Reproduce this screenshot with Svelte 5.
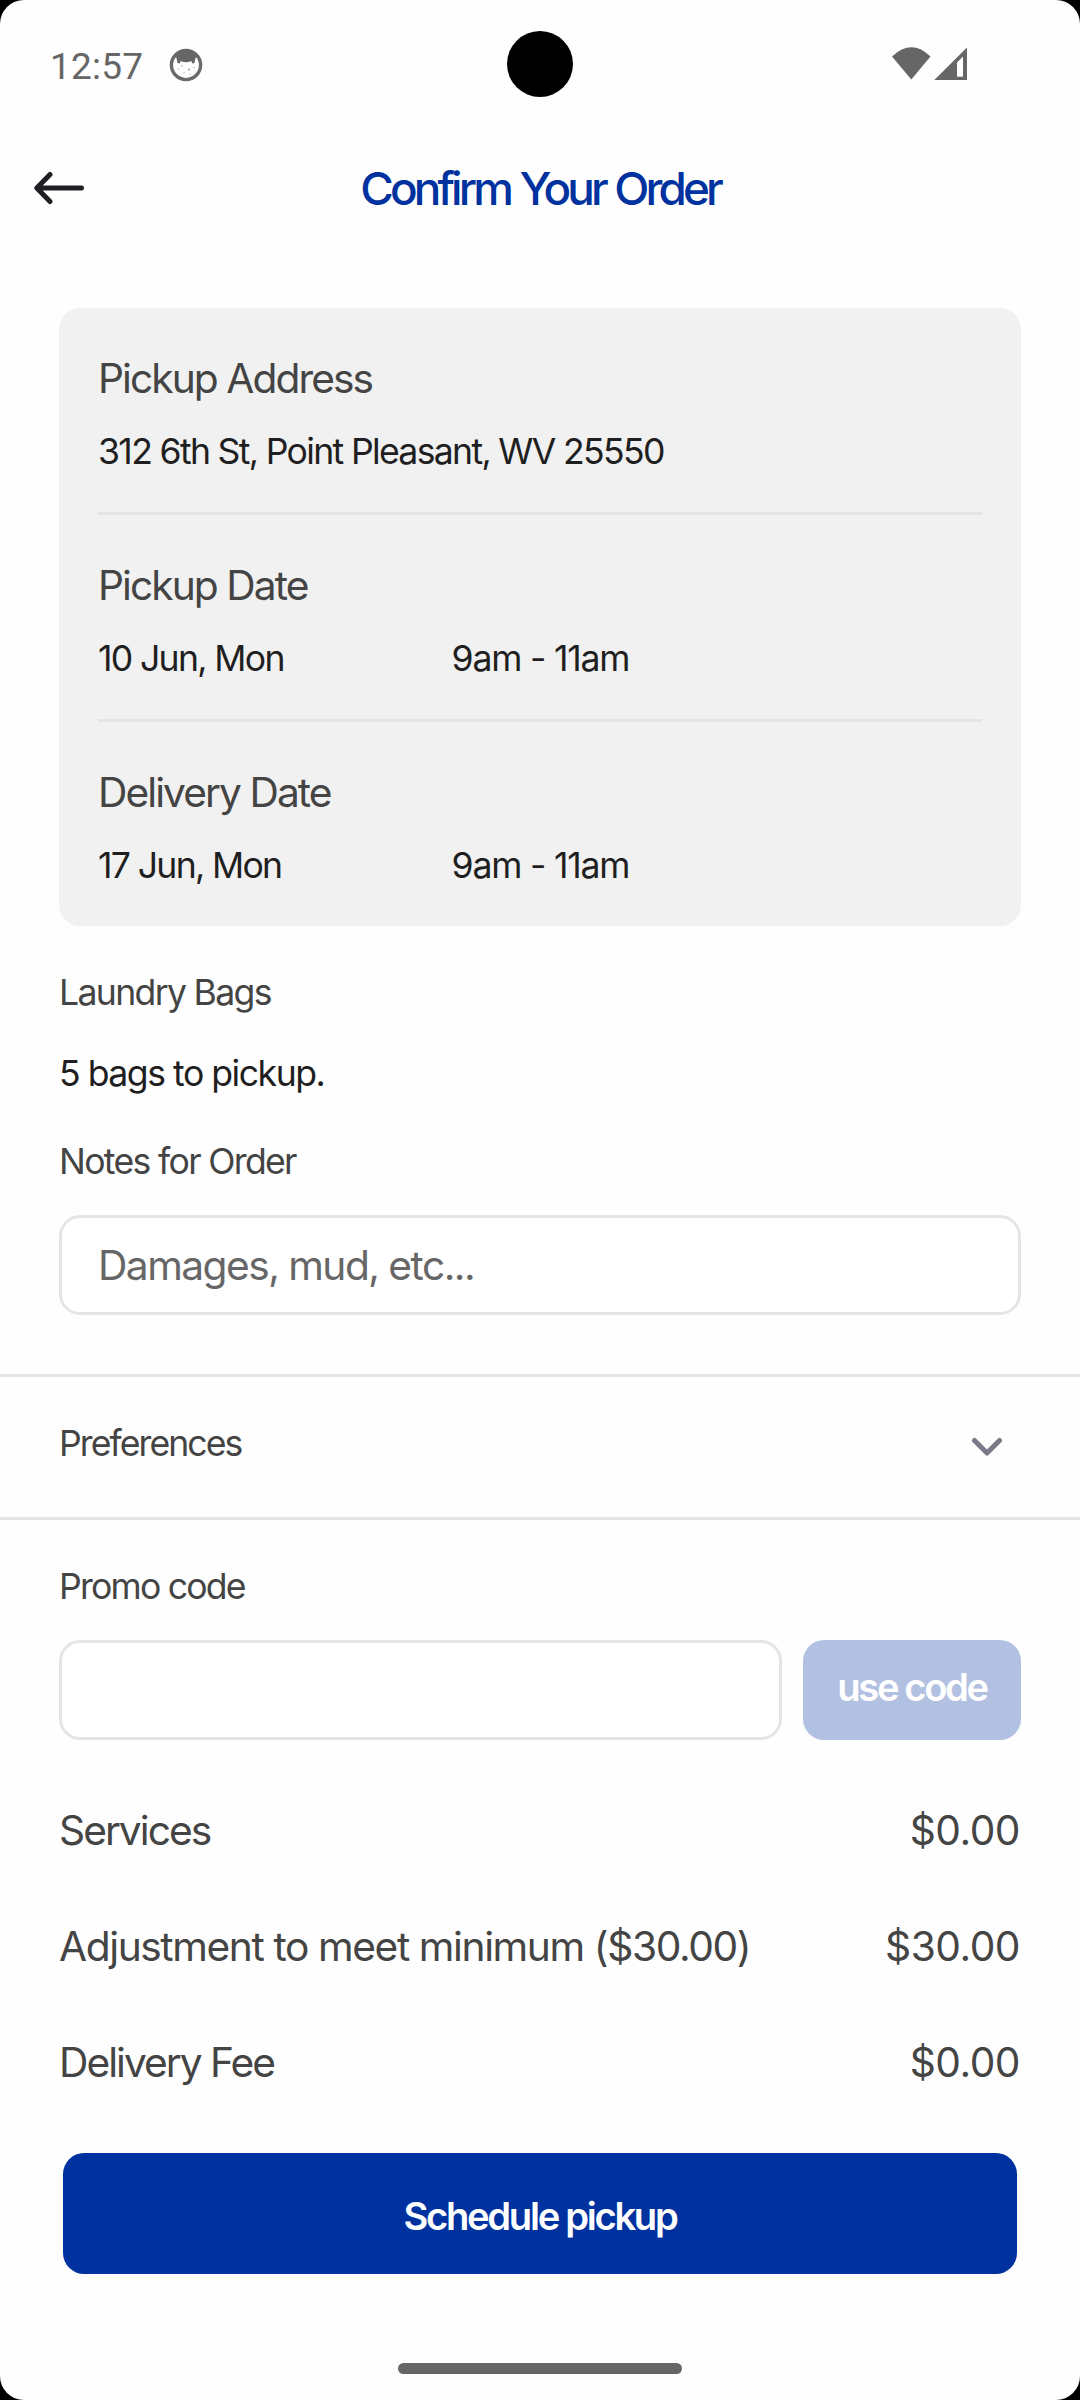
<script lang="ts">
  type Section = { label: string; value: string; time?: string };

  const sections: Section[] = [
    { label: "Pickup Address", value: "312 6th St, Point Pleasant, WV 25550" },
    { label: "Pickup Date", value: "10 Jun, Mon", time: "9am - 11am" },
    { label: "Delivery Date", value: "17 Jun, Mon", time: "9am - 11am" },
  ];

  const fees = [
    { name: "Services", amount: "$0.00" },
    { name: "Adjustment to meet minimum ($30.00)", amount: "$30.00" },
    { name: "Delivery Fee", amount: "$0.00" },
  ];

  let notes = $state("");
  let promo = $state("");
</script>

<div class="screen">
  <!-- Status bar -->
  <div class="status-bar">
    <span class="clock">12:57</span>
    <svg class="face" viewBox="0 0 34 34" width="34" height="34">
      <circle cx="17" cy="17" r="14.6" fill="none" stroke="#6a6a6a" stroke-width="3.4" />
      <path d="M5 8 Q17 -4 29 8 L26.500 10 L25.500 15 L23 15.500 L22.500 13 Q17 15.500 11.500 13 L11 15.500 L8.500 15 L7.500 10 Z" fill="#666" />
      <g fill="#888">
        <circle cx="13" cy="18" r="0.7" />
        <circle cx="20" cy="21.500" r="0.9" />
        <circle cx="9.500" cy="21" r="0.6" />
        <circle cx="25" cy="19.500" r="0.6" />
        <circle cx="15" cy="24.500" r="0.5" />
        <circle cx="21" cy="26" r="0.5" />
      </g>
    </svg>
    <svg class="signal" viewBox="0 0 76 34" width="76" height="34">
      <path d="M0 9.500 Q19.500 -9 38.500 9.500 L19.300 32.500 Z" fill="#666" />
      <path d="M75 0.500 V33 H42.300 Z M71 9.500 L65 15.500 V29.700 H71 Z" fill="#666" fill-rule="evenodd" />
    </svg>
    <div class="camera"></div>
  </div>

  <header>
    <button class="back" aria-label="Back">
      <svg viewBox="0 0 50 34" width="50" height="34">
        <path d="M47.500 17 H3 M16 3.500 L2.800 17 L16 30.500" />
      </svg>
    </button>
    <h1>Confirm Your Order</h1>
  </header>

  <main>
    <div class="card">
      {#each sections as section}
        <section>
          <p class="card-label">{section.label}</p>
          <div class="values">
            <span class="value">{section.value}</span>
            {#if section.time}
              <span class="value time">{section.time}</span>
            {/if}
          </div>
        </section>
      {/each}
    </div>

    <p class="label bags-label">Laundry Bags</p>
    <p class="bags">5 bags to pickup.</p>
    <label class="label notes-label" for="notes">Notes for Order</label>
    <input id="notes" class="field" placeholder="Damages, mud, etc..." bind:value={notes} />
  </main>

  <button class="preferences">
    <span class="label">Preferences</span>
    <svg viewBox="0 0 32 20" width="32" height="20">
      <path d="M3.500 3.500 L16 16 L28.500 3.500" />
    </svg>
  </button>

  <div class="promo">
    <label class="label" for="promo">Promo code</label>
    <div class="promo-row">
      <input id="promo" class="field" bind:value={promo} />
      <button class="use-code">use code</button>
    </div>
  </div>

  <div class="fees">
    {#each fees as fee}
      <div class="fee">
        <span class="fee-name" class:with-amount={fee.name.includes("$")}>{fee.name}</span>
        <span class="fee-amount">{fee.amount}</span>
      </div>
    {/each}
  </div>

  <button class="schedule">Schedule pickup</button>
  <div class="home-bar"></div>
</div>

<style>
  :global(body) {
    background: #000;
  }

  .screen {
    display: flex;
    flex-direction: column;
    width: 1080px;
    height: 2400px;
    overflow: hidden;
    background: #fefefe;
    border-radius: 24px;
    font-family: Inter, "Liberation Sans", sans-serif;
    color: #1f1f22;
  }

  p,
  h1 {
    margin: 0;
  }

  button {
    padding: 0;
    border: 0;
    background: none;
    font-family: inherit;
  }

  .status-bar {
    position: relative;
    display: flex;
    align-items: center;
    height: 130px;
    padding: 0 112px 0 50px;
    box-sizing: border-box;
    color: #666;
  }

  .clock {
    width: 119px;
    padding-top: 3px;
    font: 37px/44px Roboto, sans-serif;
    letter-spacing: 0.2px;
  }

  .signal {
    margin: 0 0 2px auto;
  }

  .camera {
    position: absolute;
    top: 31px;
    left: 507px;
    width: 66px;
    height: 66px;
    border-radius: 50%;
    background: #000;
  }

  header {
    display: grid;
    grid-template-columns: 84px 1fr 84px;
    align-items: center;
    height: 116px;
  }

  .back {
    display: flex;
    justify-content: flex-end;
  }

  .back path {
    fill: none;
    stroke: #202024;
    stroke-width: 5;
    stroke-linecap: round;
    stroke-linejoin: round;
  }

  h1 {
    padding-top: 1px;
    font-size: 45.8px;
    font-weight: 500;
    line-height: 58px;
    letter-spacing: -3.85px;
    word-spacing: 1px;
    text-align: center;
    color: #00329f;
  }

  main {
    display: flex;
    flex-direction: column;
    padding: 62px 59px 59px;
  }

  .card {
    padding: 0 39px;
    background: #f1f1f1;
    border-radius: 21px;
  }

  section {
    height: 204px;
    padding-top: 46px;
    box-sizing: border-box;
  }

  section + section {
    height: 207px;
    border-top: 3px solid #e5e5e5;
  }

  .card-label {
    margin-bottom: 26px;
    font-size: 40.7px;
    line-height: 50px;
    letter-spacing: -1.93px;
    color: #444;
  }

  .values {
    display: flex;
  }

  .value {
    font-size: 35.6px;
    line-height: 44px;
    letter-spacing: -1.66px;
    white-space: nowrap;
  }

  .value:not(:only-child) {
    width: 40%;
  }

  .value.time {
    letter-spacing: -1.2px;
  }

  .label {
    font-size: 35.6px;
    line-height: 44px;
    letter-spacing: -1.66px;
    color: #444;
  }

  .bags-label {
    margin-top: 45px;
  }

  .bags {
    margin: 37px 0 44px;
    font-size: 35.6px;
    line-height: 44px;
    letter-spacing: -1.47px;
  }

  .notes-label {
    margin-bottom: 31px;
  }

  .field {
    width: 100%;
    height: 100px;
    box-sizing: border-box;
    padding: 1px 36px 0;
    border: 3px solid #e5e5e5;
    border-radius: 21px;
    background: #fff;
    font: 40.7px Inter, "Liberation Sans", sans-serif;
    letter-spacing: -1.53px;
    color: #1f1f22;
  }

  .field::placeholder {
    color: #666;
    opacity: 1;
  }

  .preferences {
    display: flex;
    justify-content: space-between;
    align-items: center;
    height: 146px;
    box-sizing: border-box;
    padding: 0 77px 0 59px;
    border-top: 3px solid #e5e5e5;
    border-bottom: 3px solid #e5e5e5;
  }

  .preferences .label {
    padding-bottom: 7px;
    letter-spacing: -1.92px;
  }

  .preferences path {
    fill: none;
    stroke: #7a7988;
    stroke-width: 5;
    stroke-linecap: round;
    stroke-linejoin: round;
  }

  .promo {
    display: flex;
    flex-direction: column;
    gap: 31px;
    padding: 45px 59px 32px;
  }

  .promo .label {
    letter-spacing: -1.78px;
  }

  .promo-row {
    display: flex;
    gap: 21px;
  }

  .promo-row .field {
    flex: 1;
    min-width: 0;
  }

  .use-code {
    width: 218px;
    height: 100px;
    padding-bottom: 6px;
    border-radius: 21px;
    background: #b2c1e1;
    color: #fff;
    font-size: 38.2px;
    font-weight: 600;
    letter-spacing: -2.4px;
  }

  .fee {
    display: flex;
    justify-content: space-between;
    align-items: center;
    height: 116px;
    padding: 2px 60px 0 59px;
    box-sizing: border-box;
    font-size: 40.7px;
    line-height: 50px;
    color: #444;
  }

  .fee-name {
    letter-spacing: -1.97px;
  }

  .fee-name.with-amount {
    letter-spacing: -1.4px;
  }

  .fee-amount {
    letter-spacing: -0.5px;
  }

  .schedule {
    height: 121px;
    margin: 33px 63px 0;
    padding-top: 5px;
    border-radius: 21px;
    background: #00329f;
    color: #fff;
    font-size: 38.2px;
    font-weight: 600;
    letter-spacing: -2.3px;
  }

  .home-bar {
    width: 284px;
    height: 11px;
    margin: 89px auto 0;
    border-radius: 6px;
    background: #666;
  }
</style>
